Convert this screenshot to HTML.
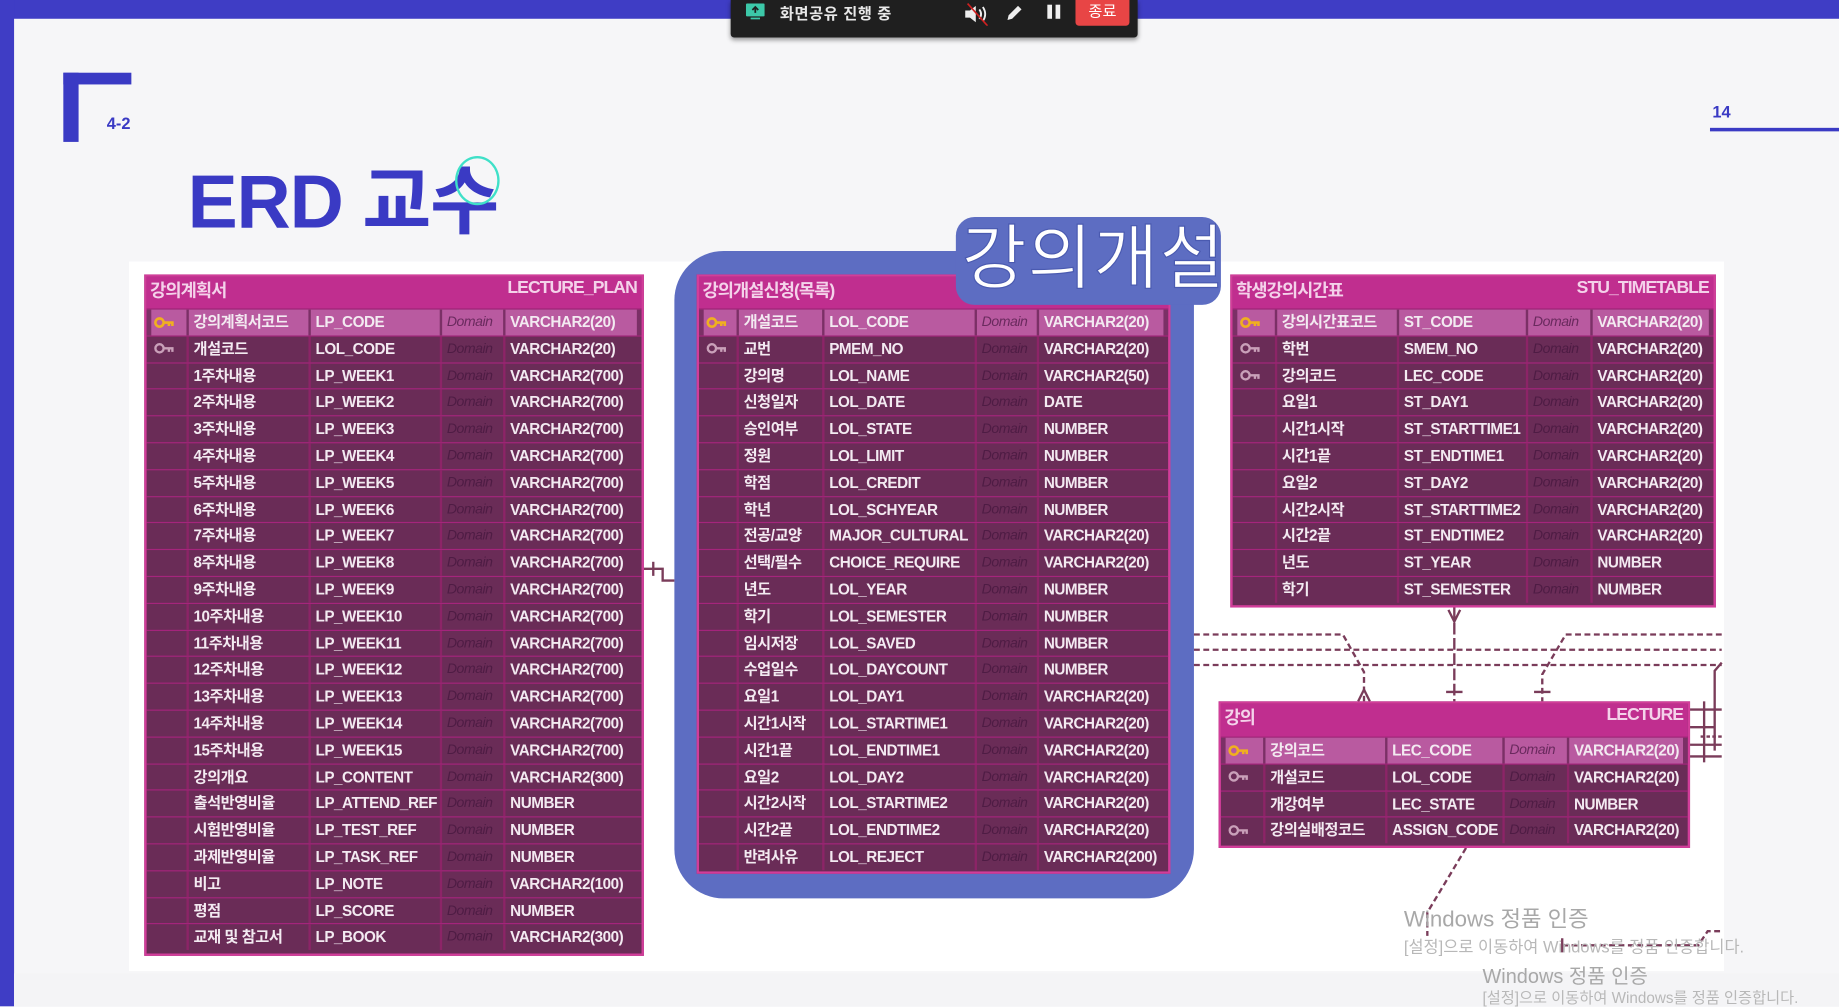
<!DOCTYPE html>
<html><head><meta charset="utf-8">
<style>
html,body{margin:0;padding:0;width:1839px;height:1006px;overflow:hidden;background:#f6f6f8;}
#s{position:absolute;left:0;top:0;width:1568px;height:858px;transform:scale(1.17283);transform-origin:0 0;font-family:"Liberation Sans","Noto Sans CJK KR",sans-serif;}
.abs{position:absolute;}
.t{position:absolute;background:#6a2c57;border:2px solid #d23d9a;box-sizing:border-box;}
.hd{height:27px;background:#c02e8f;color:#f4d2ea;font-size:15px;font-weight:bold;display:flex;justify-content:space-between;align-items:flex-start;padding:1px 4px 0 3px;box-sizing:border-box;letter-spacing:-0.8px;}
.hd .en{font-size:15px;}
.r{display:grid;height:22.8px;border-top:1px solid #a5257c;box-sizing:border-box;color:#f3eaf1;font-size:13px;font-weight:bold;letter-spacing:-0.4px;line-height:21px;padding:0 4px;}
.r>div{border-left:2px solid #8c2467;padding-left:4px;white-space:nowrap;overflow:hidden;}
.r>div:first-child{border-left:none;padding-left:2px;}
.r .d{font-style:italic;font-weight:normal;color:#4e1c44;font-size:12px;}
.r.pk{background:#7b3066;}
.r.pk>div{background:#b95aa0;border-left:2px solid #7b3066;}
.r.pk>div:first-child{background:#b95aa0;border-left:none;}
.r.pk .d{color:#6a2a5e;}
.k{display:inline-block;vertical-align:middle;margin-top:-2px;}
.t1 .r{grid-template-columns:30px 104px 112px 54px 1fr;}
.t2 .r{grid-template-columns:28px 73px 130px 53px 1fr;}
.t3 .r{grid-template-columns:32px 104px 110px 55px 1fr;}
.t4 .r{grid-template-columns:32px 104px 100px 55px 1fr;}
</style></head><body>
<div id="s">
<div class="abs" style="left:0;top:0;width:1568px;height:16px;background:#3f3dc5"></div>
<div class="abs" style="left:0;top:0;width:12px;height:858px;background:#3f3dc5"></div>
<div class="abs" style="left:12px;top:830px;width:1556px;height:28px;background:#f4f4f6"></div>
<div class="abs" style="left:54px;top:62px;width:58px;height:10px;background:#3a3ac4"></div>
<div class="abs" style="left:54px;top:62px;width:13px;height:59px;background:#3a3ac4"></div>
<div class="abs" style="left:91px;top:97px;font-size:14px;font-weight:bold;color:#3a3ac4">4-2</div>
<div class="abs" style="left:160px;top:132px;font-size:64px;font-weight:bold;color:#3a3ac4;letter-spacing:-1px;line-height:80px">ERD 교수</div>
<div class="abs" style="left:388px;top:133px;width:38px;height:42px;border:2px solid #3fe0c8;border-radius:50%;box-sizing:border-box"></div>
<div class="abs" style="left:1460px;top:87px;font-size:14px;font-weight:bold;color:#3a3ac4">14</div>
<div class="abs" style="left:1458px;top:109px;width:110px;height:3px;background:#3a3ac4"></div>
<div class="abs" style="left:110px;top:223px;width:1360px;height:605px;background:#fff"></div>
<div class="abs" style="left:575px;top:214px;width:443px;height:552px;background:#5d6dc2;border-radius:42px"></div>
<svg class="abs" style="left:0;top:0" width="1568" height="858" viewBox="0 0 1568 858">
<g stroke="#7a3c5a" stroke-width="2" fill="none">
<path d="M549 485 H565 V495 H575"/><path d="M557 479 V491"/>
<path d="M1018 541 H1145 L1163 573 V598" stroke-dasharray="5 3"/>
<path d="M1158 598 L1163 588 L1168 598"/>
<path d="M1018 554 H1468" stroke-dasharray="5 3"/>
<path d="M1018 567 H1468" stroke-dasharray="5 3"/>
<path d="M1468 541 H1335 L1315 575 V598" stroke-dasharray="5 3"/>
<path d="M1308 590 H1322"/>
<path d="M1240 518 V598" stroke-dasharray="10 3"/>
<path d="M1235 520 L1240 530 L1245 520"/><path d="M1233 590 H1247"/>
<path d="M1468 565 L1462 572 V640"/>
<path d="M1441 605 H1468 M1441 620 H1462 M1441 635 H1468 M1441 645 H1468" />
<path d="M1453 598 V650"/>
<path d="M1450 628 H1468" stroke-dasharray="3 2"/>
<path d="M1250 723 L1217 778 V798" stroke-dasharray="5 3"/>
<path d="M1332 806 H1448 L1456 794 H1468" stroke-dasharray="5 3"/>
<path d="M1332 800 V812"/>
</g>
</svg>
<div class="t t1" style="left:123px;top:234px;width:426px;height:581px">
<div class="hd"><span>강의계획서</span><span class="en">LECTURE_PLAN</span></div>
<div class="r pk"><div><svg class="k" width="18" height="10" viewBox="0 0 18 10"><circle cx="5" cy="5" r="3.5" fill="none" stroke="#f0b020" stroke-width="2.2"/><path d="M8 5H16V8M13 5V8" stroke="#f0b020" stroke-width="2.2" fill="none"/></svg></div><div>강의계획서코드</div><div>LP_CODE</div><div class="d">Domain</div><div>VARCHAR2(20)</div></div>
<div class="r"><div><svg class="k" width="18" height="10" viewBox="0 0 18 10"><circle cx="5" cy="5" r="3.5" fill="none" stroke="#c9a0b9" stroke-width="2"/><path d="M8 5H16V8M13 5V8" stroke="#c9a0b9" stroke-width="2" fill="none"/></svg></div><div>개설코드</div><div>LOL_CODE</div><div class="d">Domain</div><div>VARCHAR2(20)</div></div>
<div class="r"><div></div><div>1주차내용</div><div>LP_WEEK1</div><div class="d">Domain</div><div>VARCHAR2(700)</div></div>
<div class="r"><div></div><div>2주차내용</div><div>LP_WEEK2</div><div class="d">Domain</div><div>VARCHAR2(700)</div></div>
<div class="r"><div></div><div>3주차내용</div><div>LP_WEEK3</div><div class="d">Domain</div><div>VARCHAR2(700)</div></div>
<div class="r"><div></div><div>4주차내용</div><div>LP_WEEK4</div><div class="d">Domain</div><div>VARCHAR2(700)</div></div>
<div class="r"><div></div><div>5주차내용</div><div>LP_WEEK5</div><div class="d">Domain</div><div>VARCHAR2(700)</div></div>
<div class="r"><div></div><div>6주차내용</div><div>LP_WEEK6</div><div class="d">Domain</div><div>VARCHAR2(700)</div></div>
<div class="r"><div></div><div>7주차내용</div><div>LP_WEEK7</div><div class="d">Domain</div><div>VARCHAR2(700)</div></div>
<div class="r"><div></div><div>8주차내용</div><div>LP_WEEK8</div><div class="d">Domain</div><div>VARCHAR2(700)</div></div>
<div class="r"><div></div><div>9주차내용</div><div>LP_WEEK9</div><div class="d">Domain</div><div>VARCHAR2(700)</div></div>
<div class="r"><div></div><div>10주차내용</div><div>LP_WEEK10</div><div class="d">Domain</div><div>VARCHAR2(700)</div></div>
<div class="r"><div></div><div>11주차내용</div><div>LP_WEEK11</div><div class="d">Domain</div><div>VARCHAR2(700)</div></div>
<div class="r"><div></div><div>12주차내용</div><div>LP_WEEK12</div><div class="d">Domain</div><div>VARCHAR2(700)</div></div>
<div class="r"><div></div><div>13주차내용</div><div>LP_WEEK13</div><div class="d">Domain</div><div>VARCHAR2(700)</div></div>
<div class="r"><div></div><div>14주차내용</div><div>LP_WEEK14</div><div class="d">Domain</div><div>VARCHAR2(700)</div></div>
<div class="r"><div></div><div>15주차내용</div><div>LP_WEEK15</div><div class="d">Domain</div><div>VARCHAR2(700)</div></div>
<div class="r"><div></div><div>강의개요</div><div>LP_CONTENT</div><div class="d">Domain</div><div>VARCHAR2(300)</div></div>
<div class="r"><div></div><div>출석반영비율</div><div>LP_ATTEND_REF</div><div class="d">Domain</div><div>NUMBER</div></div>
<div class="r"><div></div><div>시험반영비율</div><div>LP_TEST_REF</div><div class="d">Domain</div><div>NUMBER</div></div>
<div class="r"><div></div><div>과제반영비율</div><div>LP_TASK_REF</div><div class="d">Domain</div><div>NUMBER</div></div>
<div class="r"><div></div><div>비고</div><div>LP_NOTE</div><div class="d">Domain</div><div>VARCHAR2(100)</div></div>
<div class="r"><div></div><div>평점</div><div>LP_SCORE</div><div class="d">Domain</div><div>NUMBER</div></div>
<div class="r"><div></div><div>교재 및 참고서</div><div>LP_BOOK</div><div class="d">Domain</div><div>VARCHAR2(300)</div></div>
</div>
<div class="t t2" style="left:594px;top:234px;width:404px;height:511px">
<div class="hd"><span>강의개설신청(목록)</span><span></span></div>
<div class="r pk"><div><svg class="k" width="18" height="10" viewBox="0 0 18 10"><circle cx="5" cy="5" r="3.5" fill="none" stroke="#f0b020" stroke-width="2.2"/><path d="M8 5H16V8M13 5V8" stroke="#f0b020" stroke-width="2.2" fill="none"/></svg></div><div>개설코드</div><div>LOL_CODE</div><div class="d">Domain</div><div>VARCHAR2(20)</div></div>
<div class="r"><div><svg class="k" width="18" height="10" viewBox="0 0 18 10"><circle cx="5" cy="5" r="3.5" fill="none" stroke="#c9a0b9" stroke-width="2"/><path d="M8 5H16V8M13 5V8" stroke="#c9a0b9" stroke-width="2" fill="none"/></svg></div><div>교번</div><div>PMEM_NO</div><div class="d">Domain</div><div>VARCHAR2(20)</div></div>
<div class="r"><div></div><div>강의명</div><div>LOL_NAME</div><div class="d">Domain</div><div>VARCHAR2(50)</div></div>
<div class="r"><div></div><div>신청일자</div><div>LOL_DATE</div><div class="d">Domain</div><div>DATE</div></div>
<div class="r"><div></div><div>승인여부</div><div>LOL_STATE</div><div class="d">Domain</div><div>NUMBER</div></div>
<div class="r"><div></div><div>정원</div><div>LOL_LIMIT</div><div class="d">Domain</div><div>NUMBER</div></div>
<div class="r"><div></div><div>학점</div><div>LOL_CREDIT</div><div class="d">Domain</div><div>NUMBER</div></div>
<div class="r"><div></div><div>학년</div><div>LOL_SCHYEAR</div><div class="d">Domain</div><div>NUMBER</div></div>
<div class="r"><div></div><div>전공/교양</div><div>MAJOR_CULTURAL</div><div class="d">Domain</div><div>VARCHAR2(20)</div></div>
<div class="r"><div></div><div>선택/필수</div><div>CHOICE_REQUIRE</div><div class="d">Domain</div><div>VARCHAR2(20)</div></div>
<div class="r"><div></div><div>년도</div><div>LOL_YEAR</div><div class="d">Domain</div><div>NUMBER</div></div>
<div class="r"><div></div><div>학기</div><div>LOL_SEMESTER</div><div class="d">Domain</div><div>NUMBER</div></div>
<div class="r"><div></div><div>임시저장</div><div>LOL_SAVED</div><div class="d">Domain</div><div>NUMBER</div></div>
<div class="r"><div></div><div>수업일수</div><div>LOL_DAYCOUNT</div><div class="d">Domain</div><div>NUMBER</div></div>
<div class="r"><div></div><div>요일1</div><div>LOL_DAY1</div><div class="d">Domain</div><div>VARCHAR2(20)</div></div>
<div class="r"><div></div><div>시간1시작</div><div>LOL_STARTIME1</div><div class="d">Domain</div><div>VARCHAR2(20)</div></div>
<div class="r"><div></div><div>시간1끝</div><div>LOL_ENDTIME1</div><div class="d">Domain</div><div>VARCHAR2(20)</div></div>
<div class="r"><div></div><div>요일2</div><div>LOL_DAY2</div><div class="d">Domain</div><div>VARCHAR2(20)</div></div>
<div class="r"><div></div><div>시간2시작</div><div>LOL_STARTIME2</div><div class="d">Domain</div><div>VARCHAR2(20)</div></div>
<div class="r"><div></div><div>시간2끝</div><div>LOL_ENDTIME2</div><div class="d">Domain</div><div>VARCHAR2(20)</div></div>
<div class="r"><div></div><div>반려사유</div><div>LOL_REJECT</div><div class="d">Domain</div><div>VARCHAR2(200)</div></div>
</div>
<div class="abs" style="left:815px;top:185px;width:226px;height:75px;background:#5d6dc2;border-radius:16px"></div>
<div class="abs" style="left:820px;top:181px;font-size:60px;color:#fff;letter-spacing:1px;line-height:80px;-webkit-text-stroke:1px #4a5ab0">강의개설</div>
<div class="t t3" style="left:1049px;top:234px;width:414px;height:284px">
<div class="hd"><span>학생강의시간표</span><span class="en">STU_TIMETABLE</span></div>
<div class="r pk"><div><svg class="k" width="18" height="10" viewBox="0 0 18 10"><circle cx="5" cy="5" r="3.5" fill="none" stroke="#f0b020" stroke-width="2.2"/><path d="M8 5H16V8M13 5V8" stroke="#f0b020" stroke-width="2.2" fill="none"/></svg></div><div>강의시간표코드</div><div>ST_CODE</div><div class="d">Domain</div><div>VARCHAR2(20)</div></div>
<div class="r"><div><svg class="k" width="18" height="10" viewBox="0 0 18 10"><circle cx="5" cy="5" r="3.5" fill="none" stroke="#c9a0b9" stroke-width="2"/><path d="M8 5H16V8M13 5V8" stroke="#c9a0b9" stroke-width="2" fill="none"/></svg></div><div>학번</div><div>SMEM_NO</div><div class="d">Domain</div><div>VARCHAR2(20)</div></div>
<div class="r"><div><svg class="k" width="18" height="10" viewBox="0 0 18 10"><circle cx="5" cy="5" r="3.5" fill="none" stroke="#c9a0b9" stroke-width="2"/><path d="M8 5H16V8M13 5V8" stroke="#c9a0b9" stroke-width="2" fill="none"/></svg></div><div>강의코드</div><div>LEC_CODE</div><div class="d">Domain</div><div>VARCHAR2(20)</div></div>
<div class="r"><div></div><div>요일1</div><div>ST_DAY1</div><div class="d">Domain</div><div>VARCHAR2(20)</div></div>
<div class="r"><div></div><div>시간1시작</div><div>ST_STARTTIME1</div><div class="d">Domain</div><div>VARCHAR2(20)</div></div>
<div class="r"><div></div><div>시간1끝</div><div>ST_ENDTIME1</div><div class="d">Domain</div><div>VARCHAR2(20)</div></div>
<div class="r"><div></div><div>요일2</div><div>ST_DAY2</div><div class="d">Domain</div><div>VARCHAR2(20)</div></div>
<div class="r"><div></div><div>시간2시작</div><div>ST_STARTTIME2</div><div class="d">Domain</div><div>VARCHAR2(20)</div></div>
<div class="r"><div></div><div>시간2끝</div><div>ST_ENDTIME2</div><div class="d">Domain</div><div>VARCHAR2(20)</div></div>
<div class="r"><div></div><div>년도</div><div>ST_YEAR</div><div class="d">Domain</div><div>NUMBER</div></div>
<div class="r"><div></div><div>학기</div><div>ST_SEMESTER</div><div class="d">Domain</div><div>NUMBER</div></div>
</div>
<div class="t t4" style="left:1039px;top:598px;width:402px;height:125px">
<div class="hd" style="height:28px"><span>강의</span><span class="en">LECTURE</span></div>
<div class="r pk"><div><svg class="k" width="18" height="10" viewBox="0 0 18 10"><circle cx="5" cy="5" r="3.5" fill="none" stroke="#f0b020" stroke-width="2.2"/><path d="M8 5H16V8M13 5V8" stroke="#f0b020" stroke-width="2.2" fill="none"/></svg></div><div>강의코드</div><div>LEC_CODE</div><div class="d">Domain</div><div>VARCHAR2(20)</div></div>
<div class="r"><div><svg class="k" width="18" height="10" viewBox="0 0 18 10"><circle cx="5" cy="5" r="3.5" fill="none" stroke="#c9a0b9" stroke-width="2"/><path d="M8 5H16V8M13 5V8" stroke="#c9a0b9" stroke-width="2" fill="none"/></svg></div><div>개설코드</div><div>LOL_CODE</div><div class="d">Domain</div><div>VARCHAR2(20)</div></div>
<div class="r"><div></div><div>개강여부</div><div>LEC_STATE</div><div class="d">Domain</div><div>NUMBER</div></div>
<div class="r"><div><svg class="k" width="18" height="10" viewBox="0 0 18 10"><circle cx="5" cy="5" r="3.5" fill="none" stroke="#c9a0b9" stroke-width="2"/><path d="M8 5H16V8M13 5V8" stroke="#c9a0b9" stroke-width="2" fill="none"/></svg></div><div>강의실배정코드</div><div>ASSIGN_CODE</div><div class="d">Domain</div><div>VARCHAR2(20)</div></div>
</div>
<div class="abs" style="left:1197px;top:773px;font-size:19px;color:#a8a8a8;line-height:24px">Windows 정품 인증</div>
<div class="abs" style="left:1197px;top:798px;font-size:14px;color:#b8b8b8;line-height:18px">[설정]으로 이동하여 Windows를 정품 인증합니다.</div>
<div class="abs" style="left:1264px;top:822px;font-size:17px;color:#a8a8a8;line-height:22px">Windows 정품 인증</div>
<div class="abs" style="left:1264px;top:843px;font-size:13px;color:#b8b8b8;line-height:16px">[설정]으로 이동하여 Windows를 정품 인증합니다.</div>
<div class="abs" style="left:623px;top:0;width:347px;height:32px;background:#1f1f1f;border-radius:0 0 3px 3px;box-shadow:0 2px 4px rgba(0,0,0,.4)"></div>
<svg class="abs" style="left:636px;top:3px" width="16" height="14" viewBox="0 0 16 14"><rect x="0" y="0" width="16" height="11" rx="1" fill="#3cc8a8"/><path d="M8 3V8M5.5 5.5L8 3L10.5 5.5" stroke="#1f1f1f" stroke-width="1.5" fill="none"/><rect x="4" y="12" width="8" height="1.5" fill="#3cc8a8"/></svg>
<div class="abs" style="left:665px;top:1px;font-size:13px;color:#e8e8e8;font-weight:bold;letter-spacing:0.5px">화면공유 진행 중</div>
<svg class="abs" style="left:821px;top:2px" width="24" height="20" viewBox="0 0 24 20"><path d="M2 7H6L11 3V17L6 13H2Z" fill="#eee"/><path d="M14 6Q17 10 14 14M17 4Q21 10 17 16" stroke="#eee" stroke-width="1.6" fill="none"/><path d="M4 1L21 20" stroke="#d02020" stroke-width="1.4"/></svg>
<svg class="abs" style="left:857px;top:4px" width="16" height="14" viewBox="0 0 16 14"><path d="M2 13L3 9L11 1L14 4L6 12Z" fill="#eee"/></svg>
<div class="abs" style="left:893px;top:4px;width:4px;height:12px;background:#eee"></div>
<div class="abs" style="left:900px;top:4px;width:4px;height:12px;background:#eee"></div>
<div class="abs" style="left:917px;top:0;width:46px;height:22px;background:#e84545;border-radius:0 0 3px 3px;color:#fff;font-size:13px;text-align:center;line-height:20px">종료</div>
</div>
</body></html>
